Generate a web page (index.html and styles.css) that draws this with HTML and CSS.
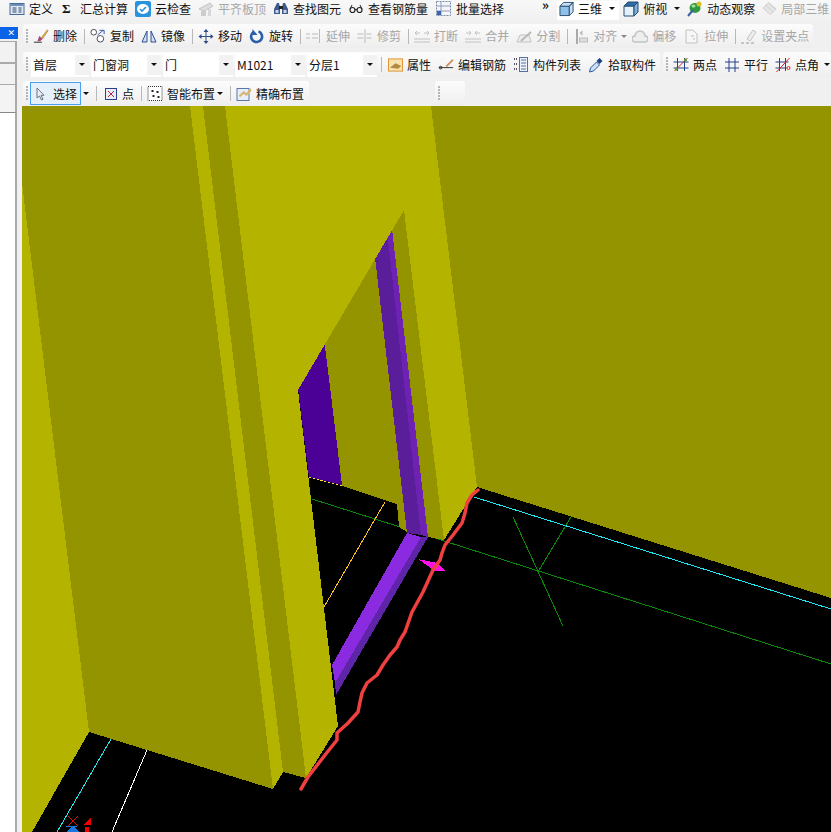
FILE: index.html
```html
<!DOCTYPE html>
<html lang="zh-CN">
<head>
<meta charset="utf-8">
<title>三维视图</title>
<link rel="stylesheet" href="styles.css">
</head>
<body>
<div class="app">
  <div class="menubar">
    <div class="tool"><svg class="ic" width="16" height="14" viewBox="0 0 15 14"><rect x=".5" y="1.500" width="14" height="11" fill="#dfe8f4" stroke="#4a6a96"/><rect x="1" y="2" width="13" height="2" fill="#6f8fbb"/><path d="M3 6h4M3 8h4M3 10h4M9 6h3M9 8h3M9 10h3" stroke="#33486a"/></svg><span>定义</span></div>
    <div class="tool"><span class="sigma">Σ</span><span>汇总计算</span></div>
    <div class="tool"><svg class="ic" width="16" height="16" viewBox="0 0 16 16"><rect width="16" height="16" rx="2" fill="#2a93dd"/><ellipse cx="8" cy="8" rx="6" ry="5" fill="#fff"/><path d="M5 8l2 2 4-4" fill="none" stroke="#2a93dd" stroke-width="1.600"/></svg><span>云检查</span></div>
    <div class="tool off"><svg class="ic" width="16" height="16" viewBox="0 0 16 16"><path d="M1 8l11-6 3 3-9 5z" fill="#ddd" stroke="#c4c4c4"/><rect x="3" y="10" width="5" height="5" fill="#ccc"/><rect x="10" y="8" width="3" height="7" fill="#d8d8d8"/></svg><span>平齐板顶</span></div>
    <div class="tool"><svg class="ic" width="16" height="14" viewBox="0 0 16 14"><path d="M4 1h2l1 5v6H1V7zM10 1h2l3 6v5H9V6z" fill="#3d5a8a"/><rect x="2.500" y="8" width="3" height="3" fill="#c9d6ea"/><rect x="10.500" y="8" width="3" height="3" fill="#c9d6ea"/><rect x="6" y="4" width="4" height="3" fill="#222"/></svg><span>查找图元</span></div>
    <div class="tool"><svg class="ic" width="16" height="10" viewBox="0 0 14 10"><circle cx="3.500" cy="6" r="2.500" fill="none" stroke="#222" stroke-width="1.200"/><circle cx="10.500" cy="6" r="2.500" fill="none" stroke="#222" stroke-width="1.200"/><path d="M6 5.500h2M1 5l2-4M13 5l-2-4" stroke="#222"/></svg><span>查看钢筋量</span></div>
    <div class="tool"><svg class="ic" width="17" height="15" viewBox="0 0 15 15"><rect x=".5" y=".5" width="14" height="14" fill="#f4f6fa" stroke="#7a8ba8" stroke-dasharray="2 1"/><path d="M5 1v13M1 5h13M1 10h13" stroke="#8d9cb6"/><rect x="1" y="10" width="4" height="4" fill="#3a64b4"/></svg><span>批量选择</span></div>
    <span class="chevrons">»</span>
    <div class="active-view">
      <div class="tool"><svg class="ic" width="15" height="16" viewBox="0 0 16 16"><path d="M1 5h10v10H1z" fill="#8fc1e8" stroke="#27496d"/><path d="M1 5l4-4h10l-4 4zM11 5l4-4v10l-4 4z" fill="#c7e0f4" stroke="#27496d"/></svg><span>三维</span></div>
      <i class="caret"></i>
    </div>
    <div class="tool"><svg class="ic" width="16" height="16" viewBox="0 0 16 16"><path d="M1 5h10v10H1z" fill="#e4f0fa" stroke="#2b4f78"/><path d="M1 5l4-4h10l-4 4z" fill="#2e6ea8" stroke="#27496d"/><path d="M11 5l4-4v10l-4 4z" fill="#7fb0da" stroke="#27496d"/></svg><span>俯视</span></div>
    <i class="caret"></i>
    <div class="tool"><svg class="ic" width="16" height="16" viewBox="0 0 16 16"><ellipse cx="8" cy="7" rx="5.500" ry="5" fill="#2f9a3e"/><circle cx="12" cy="3" r="2.500" fill="#d7c22c"/><path d="M1 15L6 9" stroke="#3a5f9a" stroke-width="2"/><ellipse cx="6.500" cy="5" rx="2" ry="1.500" fill="#a6dfa6"/></svg><span>动态观察</span></div>
    <div class="tool off"><svg class="ic" width="15" height="16" viewBox="0 0 16 16"><path d="M1 7l6-6 8 7-6 6z" fill="#e6e6e6" stroke="#cfcfcf"/><path d="M4 4l8 7M7 2l7 6" stroke="#cfcfcf"/></svg><span>局部三维</span></div>
  </div>
  <div class="workspace">
    <aside class="side">
      <div class="side-title"><span class="close">✕</span></div>
      <div class="side-row"></div>
      <div class="side-row"></div>
      <div class="side-tall"></div>
      <div class="side-list"></div>
    </aside>
    <main class="main">
      <div class="row">
        <div class="toolbar edit">
          <i class="grip"></i>
          <div class="tool"><svg class="ic" width="16" height="16" viewBox="0 0 18 16"><path d="M10 9l6-8 1 1-6 9z" fill="#e0b050" stroke="#8a6a20" stroke-width=".5"/><path d="M7 8l4 3-3 3H5z" fill="#a64a7a"/><path d="M1 15h9" stroke="#222"/></svg><span>删除</span></div>
          <i class="sep"></i>
          <div class="tool"><svg class="ic" width="16" height="16" viewBox="0 0 17 16"><circle cx="4" cy="4" r="3" fill="#fff" stroke="#445"/><circle cx="11" cy="11" r="3.500" fill="#fff" stroke="#445"/><path d="M10 2h5v4M8 7l6-5" fill="none" stroke="#2a58a8"/></svg><span>复制</span></div>
          <div class="tool"><svg class="ic" width="16" height="15" viewBox="0 0 16 15"><path d="M6 2L1 13h5zM10 2l5 11h-5z" fill="#d6e2f4" stroke="#2c4f8f"/></svg><span>镜像</span></div>
          <i class="sep"></i>
          <div class="tool"><svg class="ic" width="16" height="15" viewBox="0 0 15 15"><path d="M7.500 1v13M1 7.500h13" stroke="#2d4d86"/><path d="M7.500 0l2.500 3H5zM7.500 15L5 12h5zM0 7.500L3 5v5zM15 7.500L12 5v5z" fill="#2d4d86"/></svg><span>移动</span></div>
          <div class="tool"><svg class="ic" width="16" height="15" viewBox="0 0 15 15"><path d="M4 3a5.500 5.500 0 1 0 5-.6" fill="none" stroke="#2a5dab" stroke-width="2.600"/><path d="M3 0v6h5z" fill="#2a5dab"/></svg><span>旋转</span></div>
          <i class="sep"></i>
          <div class="tool off"><svg class="ic" width="16" height="14" viewBox="0 0 16 14"><path d="M0 5h4M6 5h6M0 9h4M6 9h6M13.500 0v14" stroke="#bbb"/></svg><span>延伸</span></div>
          <div class="tool off"><svg class="ic" width="16" height="14" viewBox="0 0 15 14"><path d="M0 5h6M0 9h6M9 5h5M9 9h5M7.500 0v14" stroke="#bbb"/></svg><span>修剪</span></div>
          <i class="sep"></i>
          <div class="tool off"><svg class="ic" width="16" height="14" viewBox="0 0 16 14"><path d="M0 10h16M0 13h16M1 4h5M10 4h5M3 2l-2 2 2 2M13 2l2 2-2 2" fill="none" stroke="#c2c2c2"/></svg><span>打断</span></div>
          <div class="tool off"><svg class="ic" width="16" height="14" viewBox="0 0 16 14"><path d="M0 10h16M0 13h16M1 4h5M10 4h5M4 2l2 2-2 2M12 2l-2 2 2 2" fill="none" stroke="#c2c2c2"/></svg><span>合并</span></div>
          <div class="tool off"><svg class="ic" width="16" height="15" viewBox="0 0 16 15"><path d="M1 13h14L13 6H4z" fill="#eee" stroke="#c2c2c2"/><path d="M5 12L15 3" stroke="#b8b8b8" stroke-width="2"/></svg><span>分割</span></div>
          <i class="sep plain"></i>
          <div class="tool off"><svg class="ic" width="14" height="15" viewBox="0 0 13 15"><path d="M1.500 0v15" stroke="#aaa" stroke-width="2"/><rect x="4" y="9" width="8" height="4" fill="#ddd" stroke="#bbb"/><path d="M4 4l3-3v6z" fill="#bbb"/></svg><span>对齐</span><i class="caret off-caret"></i></div>
          <div class="tool off pull"><svg class="ic" width="16" height="13" viewBox="0 0 16 13"><path d="M3 12a3 3 0 0 1 0-6 5 5 0 0 1 10 0 3 3 0 0 1 0 6z" fill="#eee" stroke="#c2c2c2" stroke-width="1.500"/></svg><span>偏移</span></div>
          <div class="tool off"><svg class="ic" width="17" height="15" viewBox="0 0 13 15"><path d="M1 1h7l4 4v9H1z" fill="#f6f6f6" stroke="#c2c2c2"/><path d="M6 7h3M8 10h2" stroke="#bbb"/></svg><span>拉伸</span></div>
          <i class="sep"></i>
          <div class="tool off"><svg class="ic" width="16" height="15" viewBox="0 0 16 15"><path d="M6 10l6-9 3 2-6 9z" fill="#eee" stroke="#c2c2c2"/><path d="M0 14h3M5 14h3M10 14h3" stroke="#999"/></svg><span>设置夹点</span></div>
        </div>
      </div>
      <div class="row">
        <div class="toolbar props">
          <i class="grip"></i>
          <div class="combo first"><span class="combo-text">首层</span><span class="combo-btn"><i class="caret"></i></span></div>
          <div class="combo"><span class="combo-text">门窗洞</span><span class="combo-btn"><i class="caret"></i></span></div>
          <div class="combo"><span class="combo-text">门</span><span class="combo-btn"><i class="caret"></i></span></div>
          <div class="combo"><span class="combo-text">M1021</span><span class="combo-btn"><i class="caret"></i></span></div>
          <div class="combo"><span class="combo-text">分层1</span><span class="combo-btn"><i class="caret"></i></span></div>
          <i class="sep"></i>
          <div class="tool"><svg class="ic" width="15" height="14" viewBox="0 0 16 14"><rect x=".5" y=".5" width="15" height="13" fill="#fbe3b0" stroke="#e09030"/><path d="M2 10l6-5 6 3-3 3z" fill="#b08a40"/></svg><span>属性</span></div>
          <div class="tool"><svg class="ic" width="16" height="13" viewBox="0 0 18 13"><path d="M9 8l7-7 1 1-7 7z" fill="#e0a060" stroke="#a05030" stroke-width=".5"/><path d="M1 10h16" stroke="#222"/><circle cx="3" cy="10" r="1.500" fill="none" stroke="#222"/></svg><span>编辑钢筋</span></div>
          <div class="tool"><svg class="ic" width="16" height="15" viewBox="0 0 14 15"><path d="M0 2h3M0 7h3M0 12h3" stroke="#556" stroke-width="2" stroke-dasharray="1 1"/><rect x="5.500" y=".5" width="8" height="14" fill="#eef3fb" stroke="#55709c"/><path d="M7 3h5M7 6h5M7 9h5M7 12h5" stroke="#55709c"/></svg><span>构件列表</span></div>
          <div class="tool"><svg class="ic" width="16" height="16" viewBox="0 0 15 16"><path d="M1 15l1-4 6-6 3 3-6 6z" fill="#cfe0f6" stroke="#2a55a0"/><path d="M8 4l3-3 3 3-3 3z" fill="#1e3f80"/></svg><span>拾取构件</span></div>
        </div>
        <div class="toolbar draw">
          <i class="grip"></i>
          <div class="tool"><svg class="ic" width="16" height="15" viewBox="0 0 15 15"><path d="M4 1v13M11 1v13M0 5h15M0 11h15" stroke="#26408a"/><path d="M1 14L14 1" stroke="#c03030"/><circle cx="3" cy="12" r="1.500" fill="#5a9a2a"/><circle cx="12" cy="3" r="1.500" fill="#5a9a2a"/></svg><span>两点</span></div>
          <div class="tool"><svg class="ic" width="16" height="14" viewBox="0 0 14 14"><path d="M4 0v14M10 0v14M0 4h14M0 10h14" stroke="#26408a"/></svg><span>平行</span></div>
          <div class="tool"><svg class="ic" width="16" height="15" viewBox="0 0 15 15"><path d="M4 1v13M10 1v13M0 5h13M0 11h11" stroke="#26408a"/><path d="M1 15L14 1" stroke="#e02020"/><circle cx="13" cy="11" r="1.500" fill="none" stroke="#e02020"/></svg><span>点角</span></div>
          <i class="caret pull"></i>
        </div>
      </div>
      <div class="row">
        <div class="toolbar layout">
          <i class="grip"></i>
          <div class="select-btn"><svg class="ic" width="9" height="14" viewBox="0 0 9 14"><path d="M1 1v10l2.500-2 2 4 1.500-.7-2-4H8z" fill="#eef2f8" stroke="#6a7380"/></svg><span>选择</span></div>
          <i class="caret after-select"></i>
          <i class="sep plain"></i>
          <div class="tool"><svg class="ic" width="14" height="12" viewBox="0 0 12 12"><rect x=".5" y=".5" width="11" height="11" fill="#e8edf6" stroke="#2b3f8c"/><path d="M3 3l6 6M9 3L3 9" stroke="#c02040"/></svg><span>点</span></div>
          <i class="sep"></i>
          <div class="tool"><svg class="ic" width="16" height="15" viewBox="0 0 15 15"><rect x=".5" y=".5" width="14" height="14" fill="#fff" stroke="#333" stroke-dasharray="1 1"/><path d="M4 4h2v2H4zM9 5h2v2H9zM5 9h2v2H5zM10 10h2v2h-2z" fill="#222"/></svg><span>智能布置</span><i class="caret pull"></i></div>
          <i class="sep"></i>
          <div class="tool"><svg class="ic" width="16" height="15" viewBox="0 0 15 15"><rect x=".5" y="2.500" width="12" height="12" fill="#e7eefa" stroke="#5a78a8"/><path d="M2 10l5-5 3 2 4-5 1 3-5 5-3-2-3 3z" fill="#d8b870"/></svg><span>精确布置</span></div>
        </div>
        <div class="toolbar stub"><i class="grip"></i></div>
      </div>
      <svg class="scene" width="809" height="726" viewBox="22 106 809 726" shape-rendering="crispEdges">
        <rect x="22" y="106" width="809" height="726" fill="#000"/>
        <g fill="none" stroke-width="1">
          <path d="M312 499L831 664" stroke="#0a8a0a"/>
          <path d="M474 497L831 609" stroke="#22e6f0"/>
          <path d="M513 517L563 626M571 517L538 572" stroke="#0a8a0a"/>
          <path d="M385 502L324 607" stroke="#ffc020"/>
          <path d="M111 739L57 832" stroke="#22e6f0"/>
          <path d="M147 750L112 832" stroke="#fff"/>
        </g>
        <polygon points="431,106 831,106 831,598 477,487" fill="#949400"/>
        <polygon points="323,330 373,240 407,532 399,527 397,504 342,486" fill="#949400"/>
        <polygon points="404,205 390,212 428,537 444,540" fill="#949400"/>
        <polygon points="373,240 386,222 421,535 407,533" fill="#5a1e9a"/>
        <polygon points="386,222 390,212 428,537 421,535" fill="#6e22b4"/>
        <polygon points="297,380 323,330 342,485 309,477" fill="#4b0096"/>
        <path d="M309 477L342 486" stroke="#ffe040" stroke-dasharray="2 2" fill="none"/>
        <polygon points="421,537 428,537 336,695 335,683" fill="#5e25a8"/>
        <polygon points="407,533 421,537 335,683 332,665" fill="#8a2be2"/>
        <polygon points="22,106 190,106 273,789 89,732 22,183" fill="#949400"/>
        <polygon points="22,183 89,732 32,832 22,832" fill="#b3b300"/>
        <polygon points="190,106 203,106 283,772 273,789" fill="#b3b300"/>
        <polygon points="203,106 225,106 306,778 283,772" fill="#949400"/>
        <polygon points="225,106 431,106 477,487 444,540 404,210 298,390 338,726 306,778" fill="#b3b300"/>
        <polygon points="418,559 437,563 446,571 435,571" fill="#ff10e8"/>
        <path d="M478 490L472 495 467 503 465 513 462 523 453 535 445 545 442 553 440 560 433 570 428 581 423 592 412 612 405 632 400 640 397 647 390 655 383 665 377 675 367 683 362 693 360 702 358 712 348 723 337 733 337 740 325 755 308 777 301 789" fill="none" stroke="#f04040" stroke-width="3.500" stroke-linejoin="round" stroke-linecap="round" shape-rendering="auto"/>
        <path d="M68 816L78 826M78 816L68 826" stroke="#e01010" fill="none"/>
        <path d="M66 826H77" stroke="#1878e0"/>
        <polygon points="73,826 80,832 66,832" fill="#1878e0"/>
        <polygon points="91,818 83,825 91,825" fill="#f00000"/>
        <rect x="85" y="827" width="4" height="5" fill="#f00000"/>
      </svg>
    </main>
  </div>
</div>
</body>
</html>
```
FILE: styles.css
```css
* { box-sizing: border-box; }
html, body { margin: 0; padding: 0; }
body {
  width: 831px;
  height: 832px;
  overflow: hidden;
  background: #f0f0f0;
  font-family: "Noto Sans CJK SC", "Liberation Sans", sans-serif;
  font-size: 12px;
  line-height: 14px;
  color: #111;
}
i { display: block; font-style: normal; }
.app { display: flex; flex-direction: column; height: 832px; }

.menubar {
  display: flex;
  align-items: center;
  gap: 7px;
  height: 22px;
  flex: none;
  padding: 1px 0 6px 9px;
  background: linear-gradient(#f8f8f8, #f0f0f0);
  white-space: nowrap;
  overflow: hidden;
}
.tool { display: flex; align-items: center; gap: 4px; flex: none; white-space: nowrap; }
.tool.off { color: #a6a6a6; }
.ic { display: block; flex: none; }
.sigma { font: bold 13px "Liberation Serif", serif; width: 16px; padding-left: 2px; }
.chevrons { font-size: 13px; line-height: 8px; font-weight: 700; width: 8px; align-self: flex-start; margin-left: 31px; }
.active-view {
  display: flex;
  align-items: center;
  gap: 7px;
  height: 19px;
  margin: 0 -3px -3px 0;
  padding: 0 4px 3px 2px;
  background: #fff;
}
.caret {
  width: 0;
  height: 0;
  flex: none;
  border-left: 3px solid transparent;
  border-right: 3px solid transparent;
  border-top: 3px solid #111;
}
.off-caret { border-top-color: #888; }
.pull { margin-left: -2px; }
.after-select { margin-left: -5px; }

.workspace { display: flex; flex: 1; min-height: 0; }
.side { width: 22px; flex: none; padding-top: 5px; background: #f0f0f0; display: flex; flex-direction: column; }
.side-title {
  width: 18px;
  height: 12px;
  background: #0a62e6;
  color: #fff;
  font-size: 9px;
  line-height: 12px;
  text-align: right;
  padding-right: 3px;
  margin-bottom: 2px;
}
.close { font-family: "DejaVu Sans", sans-serif; }
.side-row { width: 17px; height: 22px; background: #f2f2f2; border: 1px solid #aaa; border-left: 0; border-right: 2px solid #aaa; }
.side-tall { width: 17px; height: 27px; background: #f4f4f4; border-right: 2px solid #aaa; }
.side-list { width: 17px; flex: 1; background: #fff; border-top: 1px solid #888; border-right: 2px solid #aaa; }

.main { flex: 1; min-width: 0; display: flex; flex-direction: column; }
.row { display: flex; gap: 3px; flex: none; padding: 2px 0 0 1px; height: 27px; }
.row + .row { height: 28px; padding-top: 3px; }
.row:nth-child(3) { height: 29px; padding-top: 4px; }
.toolbar {
  display: flex;
  align-items: center;
  gap: 7px;
  height: 24px;
  flex: none;
  padding-left: 3px;
  border-radius: 3px;
  background: linear-gradient(#fcfcfc, #eeeeee);
  overflow: hidden;
}
.row + .row .toolbar { height: 25px; }
.edit { width: 790px; }
.props { width: 637px; }
.draw { width: 168px; }
.layout { width: 286px; }
.stub { width: 30px; margin-left: 123px; }
.grip {
  width: 2px;
  height: 15px;
  flex: none;
  margin-right: -2px;
  background: repeating-linear-gradient(#b4b4b4 0 2px, transparent 2px 3px);
}
.sep { width: 1px; height: 15px; flex: none; margin-right: -2px; background: #b8b8b8; }
.sep.plain { margin-right: 0; }
.props .sep { margin: 0 -1px 0 2px; }

.combo { display: flex; align-items: center; width: 70px; height: 24px; flex: none; background: #fff; margin-right: -5px; }
.combo.first { width: 58px; margin-left: -2px; }
.combo-text { flex: 1; padding-left: 2px; color: #111; }
.combo-btn { width: 14px; height: 20px; display: flex; align-items: center; justify-content: center; background: #f2f2f2; }

.select-btn {
  display: flex;
  align-items: center;
  gap: 8px;
  width: 51px;
  height: 23px;
  flex: none;
  margin-left: -3px;
  padding-left: 5px;
  background: #e6f0fa;
  border: 1px solid #4aa0f0;
}
.scene { display: block; flex: none; }
```
